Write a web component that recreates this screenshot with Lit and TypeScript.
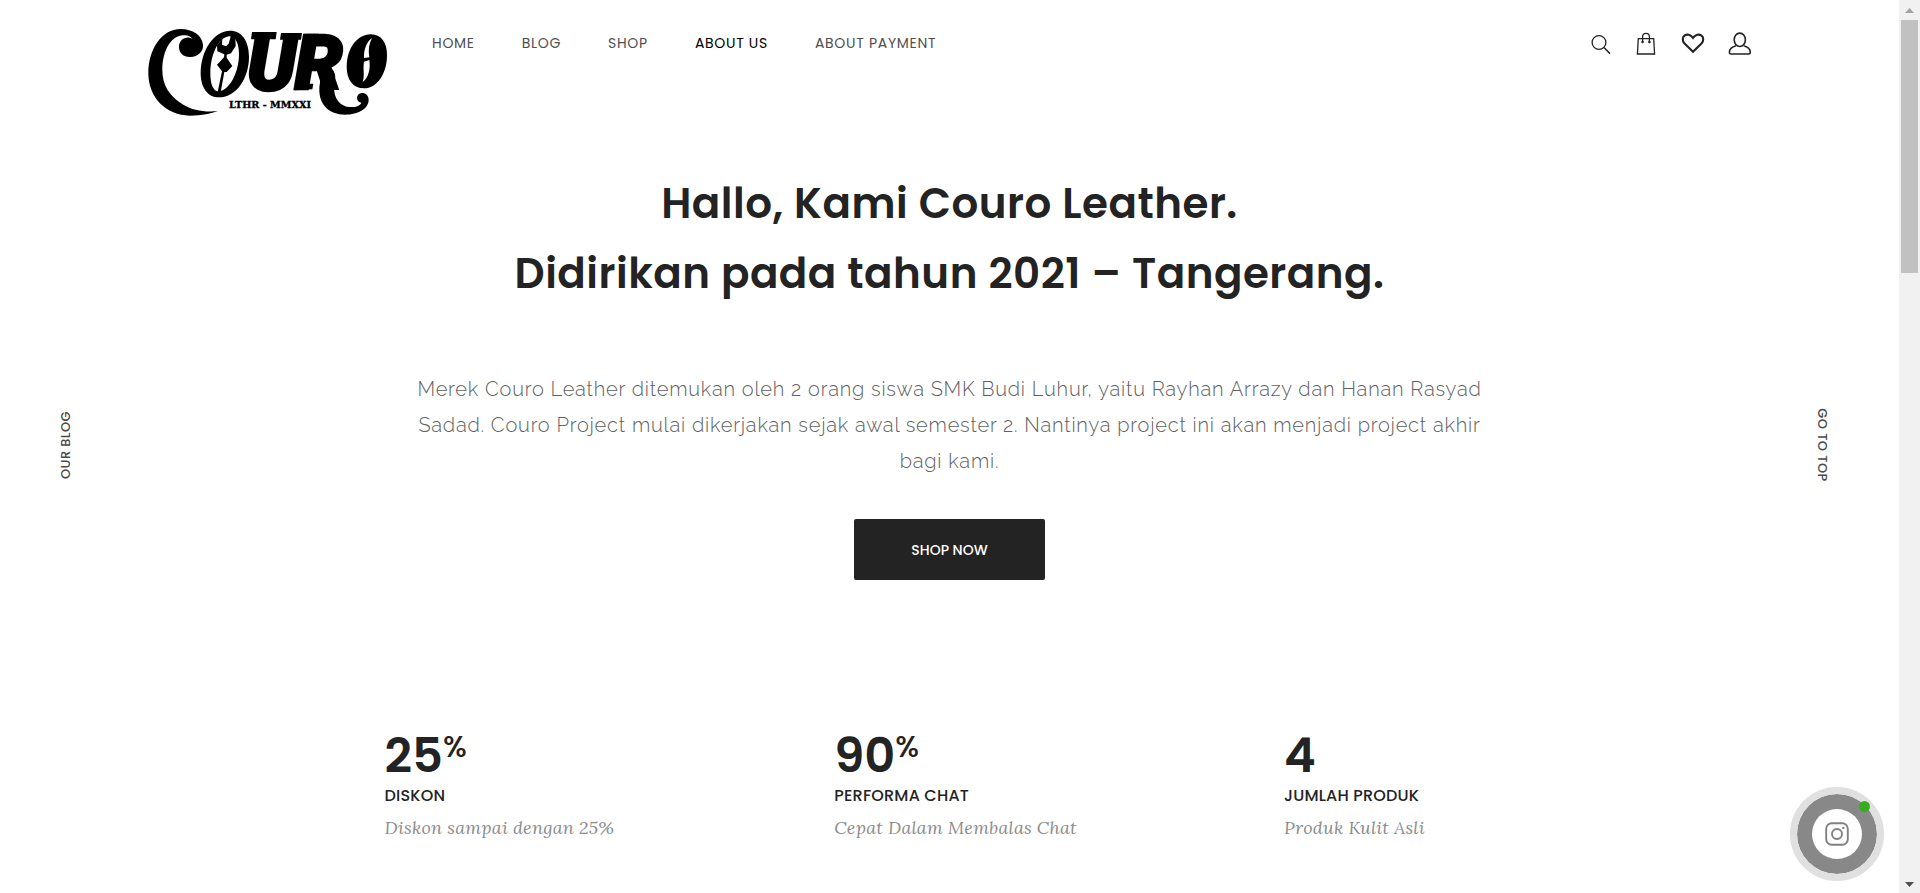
import { LitElement, html, css, svg } from "lit";
import { customElement } from "lit/decorators.js";
import { classMap } from "lit/directives/class-map.js";

interface NavItem {
  label: string;
  active?: boolean;
}

interface Stat {
  value: string;
  unit?: string;
  label: string;
  note: string;
}

const NAV: NavItem[] = [
  { label: "HOME" },
  { label: "BLOG" },
  { label: "SHOP" },
  { label: "ABOUT US", active: true },
  { label: "ABOUT PAYMENT" },
];

const STATS: Stat[] = [
  { value: "25", unit: "%", label: "DISKON", note: "Diskon sampai dengan 25%" },
  { value: "90", unit: "%", label: "PERFORMA CHAT", note: "Cepat Dalam Membalas Chat" },
  { value: "4", label: "JUMLAH PRODUK", note: "Produk Kulit Asli" },
];

const ACTIONS = [
  {
    label: "Search",
    art: svg`<circle cx="9" cy="10.5" r="6.9" stroke-width="1.3"/><path d="M14 15.5L20 21.6" stroke-width="1.5"/>`,
  },
  {
    label: "Cart",
    art: svg`<path d="M2.3 6.6H17.7L18.6 22H1.4Z" stroke-width="1.3"/><path d="M6.6 10V4.6Q6.6 1.4 10 1.4T13.4 4.6V10" stroke-width="1.3"/><circle cx="6.6" cy="10" r="1" fill="currentColor" stroke-width="0.6"/><circle cx="13.4" cy="10" r="1" fill="currentColor" stroke-width="0.6"/>`,
  },
  {
    label: "Wishlist",
    art: svg`<path d="M11 19.7L2.3 11.2C0.1 8.8 0.4 5.2 2.5 3.7C5 1.8 8.5 2.3 11 5.9C13.5 2.3 17 1.8 19.5 3.7C21.6 5.2 21.9 8.8 19.7 11.2Z" stroke-width="2.1"/>`,
  },
  {
    label: "Account",
    art: svg`<ellipse cx="11.8" cy="7.8" rx="5.6" ry="6.7" stroke-width="1.6"/><path d="M8 13.8C4 14.8 1.4 16.6 1.4 20.4Q1.4 22 3 22H20.8Q22.3 22 22.3 20.4C22.3 16.6 19.6 14.8 15.7 13.8" stroke-width="1.6"/>`,
  },
];

@customElement("couro-logo")
export class CouroLogo extends LitElement {
  static styles = css`
    :host { display: block; width: 240px; }
    svg { display: block; width: 100%; height: auto; overflow: visible; }
    .letter { font-family: Roboto, sans-serif; font-style: italic; font-weight: 900; font-size: 228px; stroke: #000; stroke-width: 8px; }
    .tag { font-family: "DejaVu Serif", serif; font-weight: 700; font-size: 29px; stroke: #000; stroke-width: 1px; }
  `;

  render() {
    return html`
      <svg viewBox="54 54 720 270" role="img" aria-label="Couro">
        <path d="M219 104C216 76 188 57 152 57C95 57 55 118 55 190C55 262 108 317 180 317C215 317 245 310 264 303C225 307 188 301 160 284C118 259 97 226 97 180C97 130 118 80 157 76C172 74 183 79 187 87C170 76 147 88 147 111C147 130 162 142 181 141C204 140 221 124 219 104Z"/>
        <path fill-rule="evenodd" d="M300 62C335 62 357 92 357 140C357 205 318 262 268 262C232 262 212 232 212 188C212 122 252 62 300 62ZM297 79C265 82 241 135 241 190C241 222 249 244 265 244C296 244 327 190 327 132C327 100 316 78 297 79Z"/>
        <path d="M261 106L277 86L276 104L288 109L296 101L303 76L316 84L317 108L303 130L290 134L290 143L307 168L290 186L283 186L272 246L263 246L276 184L261 164L282 142L283 133L262 124Z"/>
        <text class="letter" x="351" y="240">U</text>
        <path d="M366 66H440L437 88H363ZM453 69H516L513 89H450Z"/>
        <text class="letter" x="494" y="236">R</text>
        <path d="M524 71H566V92H520ZM495 241L498 221H550L547 238Z"/>
        <path d="M560 165C592 160 622 178 615 210C610 235 610 262 632 281C654 298 690 292 694 278C680 276 677 260 687 252C699 245 716 252 716 270C716 296 684 314 646 314C595 314 568 282 568 240C568 214 580 196 560 165Z"/>
        <path d="M722 73C754 73 771 98 771 135C771 190 742 235 702 235C668 235 650 208 650 170C650 115 682 73 722 73Z"/>
        <path d="M726 84C711 95 701 116 702 144L718 142C714 120 717 101 726 84ZM702 155L718 150C722 176 716 203 698 216C705 196 698 178 702 155Z" fill="#fff"/>
        <text class="tag" x="297" y="294">LTHR - MMXXI</text>
      </svg>
    `;
  }
}

@customElement("page-scrollbar")
export class PageScrollbar extends LitElement {
  static styles = css`
    :host { display: flex; flex-direction: column; justify-content: space-between; width: 21px; height: 100vh; background: #f1f1f1; }
    .arrow { display: block; width: 21px; height: 20px; fill: #505050; }
    .arrow.up { fill: #a3a3a3; }
    .track { flex: 1; padding: 0 2px; }
    .thumb { height: 29.7%; background: #c1c1c1; }
  `;

  render() {
    return html`
      <svg class="arrow up" viewBox="0 0 21 20"><path d="M6 13L10.5 8L15 13Z"/></svg>
      <div class="track"><div class="thumb"></div></div>
      <svg class="arrow" viewBox="0 0 21 20"><path d="M6 9L10.5 14L15 9Z"/></svg>
    `;
  }
}

@customElement("app-root")
export class AppRoot extends LitElement {
  static styles = css`
    :host {
      display: flex;
      height: 100vh;
      overflow: hidden;
      background: #fff;
      color: #232323;
      font-family: Poppins, Inter, sans-serif;
    }
    * { box-sizing: border-box; }
    a { color: inherit; text-decoration: none; }
    .page { position: relative; flex: 1; min-width: 0; }
    .header { display: flex; align-items: flex-start; padding: 28px 147px 0 148px; }
    .nav { display: flex; gap: 47px; margin-left: 44px; }
    .nav-link { font-size: 14px; line-height: 30px; letter-spacing: 0.05em; color: #505050; }
    .nav-link.active { color: #000; }
    .actions { display: flex; gap: 22px; margin-left: auto; padding-top: 4px; }
    .action { display: block; width: 24px; height: 24px; padding: 0; border: 0; background: none; color: #232323; cursor: pointer; }
    .action svg { display: block; overflow: visible; fill: none; stroke: currentColor; }
    .intro { display: flex; flex-direction: column; align-items: center; padding-top: 51px; text-align: center; }
    .title { margin: 0; font-size: 42px; line-height: 70px; font-weight: 600; letter-spacing: 0.012em; }
    .lead {
      max-width: 1080px;
      margin: 62px 0 40px;
      font-family: Raleway, "Open Sans", sans-serif;
      font-size: 20px;
      line-height: 36px;
      font-weight: 300;
      font-variant-numeric: oldstyle-nums;
      letter-spacing: 0.04em;
      color: #606060;
    }
    .cta { padding: 21px 57px 19px; border-radius: 2px; background: #232323; color: #fff; font-size: 14px; line-height: 21px; font-weight: 500; }
    .stats { display: grid; grid-template-columns: repeat(3, 1fr); padding: 150px 8.7% 0 20.25%; }
    .value { display: flex; align-items: flex-start; font-size: 48px; line-height: 52px; font-weight: 600; }
    .unit { font-size: 30px; line-height: 34px; font-weight: 500; }
    .label { margin: 0; font-size: 16px; line-height: 28px; font-weight: 500; letter-spacing: 0.012em; }
    .note { margin: 0; font-family: Lora, "Liberation Serif", serif; font-style: italic; font-size: 18px; line-height: 36px; letter-spacing: 0.012em; color: #8c8c8c; }
    .side { position: absolute; top: 49.8%; font-size: 13px; line-height: 20px; font-weight: 500; letter-spacing: 0.03em; color: #4a4a4a; writing-mode: vertical-rl; }
    .side.left { left: 56px; transform: translateY(-50%) rotate(180deg); }
    .side.right { right: 67px; transform: translateY(-50%); }
    .chat {
      position: absolute;
      right: 15px;
      bottom: 12px;
      display: grid;
      place-items: center;
      width: 94px;
      height: 94px;
      padding: 0;
      border: 7px solid #e0e0e0;
      border-radius: 50%;
      background: #888;
      background-clip: padding-box;
      cursor: pointer;
    }
    .chat-core { display: grid; place-items: center; width: 50px; height: 50px; border-radius: 50%; background: #fff; }
    .chat-dot { position: absolute; top: 7px; right: 7px; width: 11px; height: 11px; border-radius: 50%; background: #36ae1c; }
  `;

  render() {
    return html`
      <div class="page">
        <header class="header">
          <a href="#"><couro-logo></couro-logo></a>
          <nav class="nav">
            ${NAV.map(
              (item) => html`<a href="#" class=${classMap({ "nav-link": true, active: !!item.active })}>${item.label}</a>`
            )}
          </nav>
          <div class="actions">
            ${ACTIONS.map(
              (action) => html`<button class="action" aria-label=${action.label}>
                <svg width="24" height="24" viewBox="0 0 24 24">${action.art}</svg>
              </button>`
            )}
          </div>
        </header>

        <main>
          <section class="intro">
            <h1 class="title">Hallo, Kami Couro Leather.<br />Didirikan pada tahun 2021 – Tangerang.</h1>
            <p class="lead">
              Merek Couro Leather ditemukan oleh 2 orang siswa SMK Budi Luhur, yaitu Rayhan Arrazy dan Hanan Rasyad
              Sadad. Couro Project mulai dikerjakan sejak awal semester 2. Nantinya project ini akan menjadi project
              akhir bagi kami.
            </p>
            <a class="cta" href="#">SHOP NOW</a>
          </section>

          <section class="stats">
            ${STATS.map(
              (stat) => html`<div>
                <div class="value">${stat.value}${stat.unit ? html`<span class="unit">${stat.unit}</span>` : ""}</div>
                <h2 class="label">${stat.label}</h2>
                <p class="note">${stat.note}</p>
              </div>`
            )}
          </section>
        </main>

        <a class="side left" href="#">OUR BLOG</a>
        <a class="side right" href="#">GO TO TOP</a>

        <button class="chat" aria-label="Instagram">
          <span class="chat-core">
            <svg width="24" height="24" viewBox="0 0 24 24" fill="none" stroke="#808080" stroke-width="1.9">
              <rect x="1.2" y="1.2" width="21.6" height="21.6" rx="5.5" />
              <circle cx="12" cy="12" r="5" />
              <circle cx="18.3" cy="5.9" r="1.2" fill="#808080" stroke="none" />
            </svg>
          </span>
          <span class="chat-dot"></span>
        </button>
      </div>
      <page-scrollbar></page-scrollbar>
    `;
  }
}
